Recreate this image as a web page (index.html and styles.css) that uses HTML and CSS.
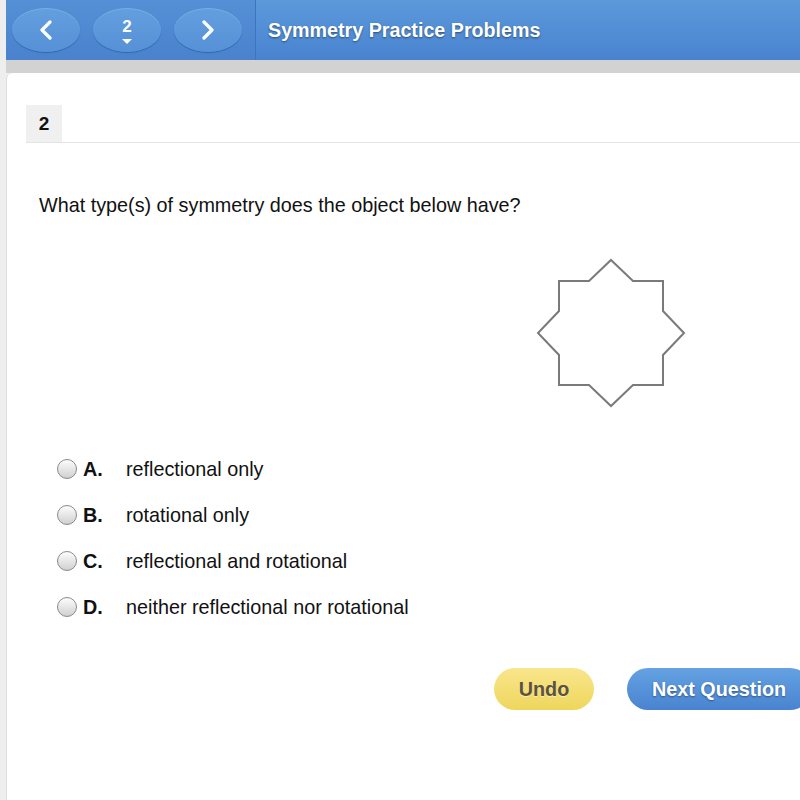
FILE: index.html
```html
<!DOCTYPE html>
<html lang="en">

<head>
    <meta charset="UTF-8">
    <meta name="viewport" content="width=device-width, initial-scale=1.0">
    <title>Symmetry Practice Problems</title>
    <link rel="stylesheet" href="styles.css">
</head>

<body>
    <div class="app">
        <header class="topbar">
            <nav class="pager">
                <a href="javascript:;" class="pagebtn">
                    <svg width="14" height="20" viewBox="0 0 14 20"><path d="M11 2 L3 10 L11 18" fill="none" stroke="#fff" stroke-width="3.2" stroke-linecap="round" stroke-linejoin="round"/></svg>
                </a>
                <a href="javascript:;" class="pagebtn pagenum">
                    <span>2</span>
                    <i class="caret"></i>
                </a>
                <a href="javascript:;" class="pagebtn">
                    <svg width="14" height="20" viewBox="0 0 14 20"><path d="M3 2 L11 10 L3 18" fill="none" stroke="#fff" stroke-width="3.2" stroke-linecap="round" stroke-linejoin="round"/></svg>
                </a>
            </nav>
            <h1 class="title">Symmetry Practice Problems</h1>
        </header>
        <div class="strip"></div>

        <main class="card">
            <div class="qhead"><span class="qnum">2</span></div>

            <p class="prompt">What type(s) of symmetry does the object below have?</p>

            <div class="figure">
                <!-- 八角星：正方形 + 菱形 -->
                <svg width="150" height="150" viewBox="0 0 150 150">
                    <polygon points="75,2 97,23 127,23 127,53 148,75 127,97 127,127 97,127 75,148 53,127 23,127 23,97 2,75 23,53 23,23 53,23"
                        fill="none" stroke="#7a7a7a" stroke-width="2"/>
                </svg>
            </div>

            <ul class="choices">
                <li><span class="radio"></span><b>A.</b><span>reflectional only</span></li>
                <li><span class="radio"></span><b>B.</b><span>rotational only</span></li>
                <li><span class="radio"></span><b>C.</b><span>reflectional and rotational</span></li>
                <li><span class="radio"></span><b>D.</b><span>neither reflectional nor rotational</span></li>
            </ul>

            <div class="actions">
                <a href="javascript:;" class="btn undo">Undo</a>
                <a href="javascript:;" class="btn next">Next Question</a>
            </div>
        </main>
    </div>
</body>

</html>
```

FILE: styles.css
```css
* {
    margin: 0;
    padding: 0;
    box-sizing: border-box;
}

body {
    background-color: #eeeeee;
    font-family: "Liberation Sans", Arial, sans-serif;
    color: #111;
    overflow: hidden;
}

.app {
    margin-left: 6px;
    width: 830px;
    height: 800px;
    display: flex;
    flex-direction: column;
}

.topbar {
    height: 60px;
    display: flex;
    background: linear-gradient(#5b99da, #4983d0);
}

.pager {
    width: 250px;
    display: flex;
    align-items: center;
    gap: 13px;
    padding-left: 6px;
    background: linear-gradient(#5590d6, #4a82cd);
    border-right: 1px solid #3e73bd;
}

.pagebtn {
    width: 68px;
    height: 44px;
    border-radius: 50%;
    display: flex;
    flex-direction: column;
    align-items: center;
    justify-content: center;
    background: linear-gradient(#639fdf, #5690d6);
    box-shadow: 0 1px 1px rgba(30, 70, 140, 0.5), inset 0 1px 0 rgba(255, 255, 255, 0.15);
    text-decoration: none;
}

.pagenum span {
    color: #fff;
    font-size: 17px;
    font-weight: bold;
    line-height: 18px;
    margin-top: 2px;
}

.caret {
    width: 0;
    height: 0;
    margin-top: 3px;
    border-left: 5px solid transparent;
    border-right: 5px solid transparent;
    border-top: 5px solid #fff;
}

.title {
    padding-left: 12px;
    line-height: 60px;
    font-size: 19.7px;
    font-weight: bold;
    color: #fff;
    text-shadow: 0 1px 2px rgba(0, 0, 0, 0.45);
}

.strip {
    height: 13px;
    background-color: #d2d2d2;
}

.card {
    flex: 1;
    background-color: #fff;
    border-left: 1px solid #dcdcdc;
    border-top-left-radius: 6px;
}

.qhead {
    margin: 32px 0 0 19px;
    border-bottom: 1px solid #e4e4e4;
}

.qnum {
    display: block;
    width: 36px;
    height: 37px;
    line-height: 37px;
    text-align: center;
    background-color: #f0f0f0;
    font-size: 19px;
    font-weight: bold;
}

.prompt {
    margin: 50px 0 0 32px;
    font-size: 19.8px;
    line-height: 24px;
}

.figure {
    margin: 41px 0 0 529px;
    height: 150px;
}

.choices {
    list-style: none;
    margin: 38px 0 0 50px;
}

.choices li {
    height: 46px;
    display: flex;
    align-items: center;
    font-size: 19.8px;
}

.radio {
    width: 20px;
    height: 20px;
    border: 1px solid #8a8a8a;
    border-radius: 50%;
    background: linear-gradient(#fdfdfd, #d0d0d0);
    margin-right: 6px;
}

.choices b {
    width: 43px;
}

.actions {
    margin: 38px 0 0 487px;
    display: flex;
    gap: 33px;
}

.btn {
    height: 42px;
    line-height: 42px;
    border-radius: 21px;
    font-size: 19.8px;
    font-weight: bold;
    text-align: center;
    text-decoration: none;
}

.undo {
    width: 100px;
    color: #5b533f;
    background: linear-gradient(#f9e68c, #eed65c);
    text-shadow: 0 1px 0 rgba(255, 255, 255, 0.5);
}

.next {
    width: 184px;
    color: #fff;
    background: linear-gradient(#64a2e2, #4983d0);
    text-shadow: 0 1px 2px rgba(0, 0, 0, 0.4);
}
```
